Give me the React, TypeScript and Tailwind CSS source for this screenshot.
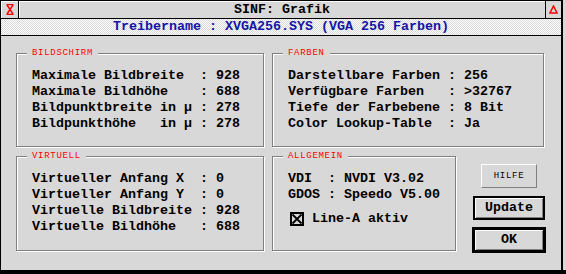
import React from 'react';

const bildschirm = [
  'Maximale Bildbreite  : 928',
  'Maximale Bildhöhe    : 688',
  'Bildpunktbreite in µ : 278',
  'Bildpunkthöhe   in µ : 278',
];

const farben = [
  'Darstellbare Farben : 256',
  'Verfügbare Farben   : >32767',
  'Tiefe der Farbebene : 8 Bit',
  'Color Lookup-Table  : Ja',
];

const virtuell = [
  'Virtueller Anfang X  : 0',
  'Virtueller Anfang Y  : 0',
  'Virtuelle Bildbreite : 928',
  'Virtuelle Bildhöhe   : 688',
];

function Group({
  label,
  className,
  children,
}: {
  label: string;
  className: string;
  children: React.ReactNode;
}) {
  return (
    <div
      className={`relative border border-[#808080] shadow-[inset_1px_1px_0_#fff,1px_1px_0_#fff] pl-[15px] ${className}`}
    >
      <span className="absolute left-[10px] top-[-5px] px-[5px] bg-[#d8d8d8] text-[9px] leading-[9px] font-normal tracking-[0.7px] text-[#ff0000]">
        {label}
      </span>
      {children}
    </div>
  );
}

function Lines({ rows }: { rows: string[] }) {
  return (
    <div className="flex flex-col">
      {rows.map((r) => (
        <div key={r} className="h-[16px] leading-[16px] whitespace-pre">
          {r}
        </div>
      ))}
    </div>
  );
}

export default function App() {
  return (
    <div className="w-[566px] h-[274px] bg-[#d8d8d8] border-b-4 border-black font-['Liberation_Mono',monospace] text-[13.33px] font-bold text-black">
      <div className="w-[563px] h-full border-l border-t border-r-2 border-black flex flex-col">
        {/* Title bar */}
        <div className="flex h-[18px] border-b border-black">
          <div className="w-[18px] border-r border-black shadow-[inset_1px_1px_0_#fff] flex items-center justify-center">
            <svg width="8" height="11" viewBox="0 0 8 11">
              <path
                d="M0.5 0.5H7.5M0.5 10.5H7.5M1 1L7 10M7 1L1 10"
                stroke="#ff0000"
                strokeWidth="1.4"
                fill="none"
              />
            </svg>
          </div>
          <div className="flex-1 shadow-[inset_1px_1px_0_#fff] flex items-center justify-center leading-none whitespace-pre">
            SINF: Grafik
          </div>
          <div className="w-[16px] border-l border-black flex items-center justify-center">
            <svg width="9" height="9" viewBox="0 0 9 9">
              <path d="M4.5 1L8 8H1Z" stroke="#ff0000" strokeWidth="1.5" fill="none" />
            </svg>
          </div>
        </div>

        {/* Info line */}
        <div className="h-[17px] border-b border-black bg-[image:repeating-conic-gradient(#ffffff_0_25%,#d8d8d8_0_50%)] bg-[length:2px_2px] flex items-center justify-center text-[#1414a8] leading-none whitespace-pre">
          Treibername : XVGA256.SYS (VGA 256 Farben)
        </div>

        {/* Content */}
        <div className="flex-1 pt-[17px] pl-[15px] flex flex-col gap-[9px]">
          <div className="flex gap-[8px]">
            <Group label="BILDSCHIRM" className="w-[248px] h-[94px] pt-[14px]">
              <Lines rows={bildschirm} />
            </Group>
            <Group label="FARBEN" className="w-[272px] h-[94px] pt-[14px]">
              <Lines rows={farben} />
            </Group>
          </div>

          <div className="flex items-start">
            <Group label="VIRTUELL" className="w-[248px] h-[95px] pt-[14px]">
              <Lines rows={virtuell} />
            </Group>
            <Group label="ALLGEMEIN" className="ml-[8px] w-[184px] h-[95px] pt-[14px]">
              <Lines rows={['VDI  : NVDI V3.02', 'GDOS : Speedo V5.00']} />
              <div className="mt-[8px] flex items-center gap-[8px] h-[16px]">
                <svg width="14" height="14" viewBox="0 0 14 14" className="ml-[2px]">
                  <rect x="1" y="1" width="12" height="12" stroke="#000" strokeWidth="2" fill="none" />
                  <path d="M2.5 2.5L11.5 11.5M11.5 2.5L2.5 11.5" stroke="#000" strokeWidth="1.8" />
                </svg>
                <span className="leading-[16px]">Line-A aktiv</span>
              </div>
            </Group>

            <div className="ml-[16px] w-[74px] flex flex-col items-center">
              <button className="mt-[8px] w-[56px] h-[24px] border border-t-white border-l-white border-b-[#808080] border-r-[#808080] bg-[#d8d8d8] text-black text-[9px] leading-none tracking-[0.7px] font-normal flex items-center justify-center">
                HILFE
              </button>
              <button className="mt-[8px] w-[72px] h-[24px] border-2 border-black bg-[#d8d8d8] shadow-[inset_1px_1px_0_#fff,inset_-1px_-1px_0_#808080] leading-none flex items-center justify-center">
                Update
              </button>
              <button className="mt-[7px] w-[74px] h-[26px] border-[3px] border-black bg-[#d8d8d8] shadow-[inset_1px_1px_0_#fff,inset_-1px_-1px_0_#808080] leading-none flex items-center justify-center">
                OK
              </button>
            </div>
          </div>
        </div>
      </div>
    </div>
  );
}
